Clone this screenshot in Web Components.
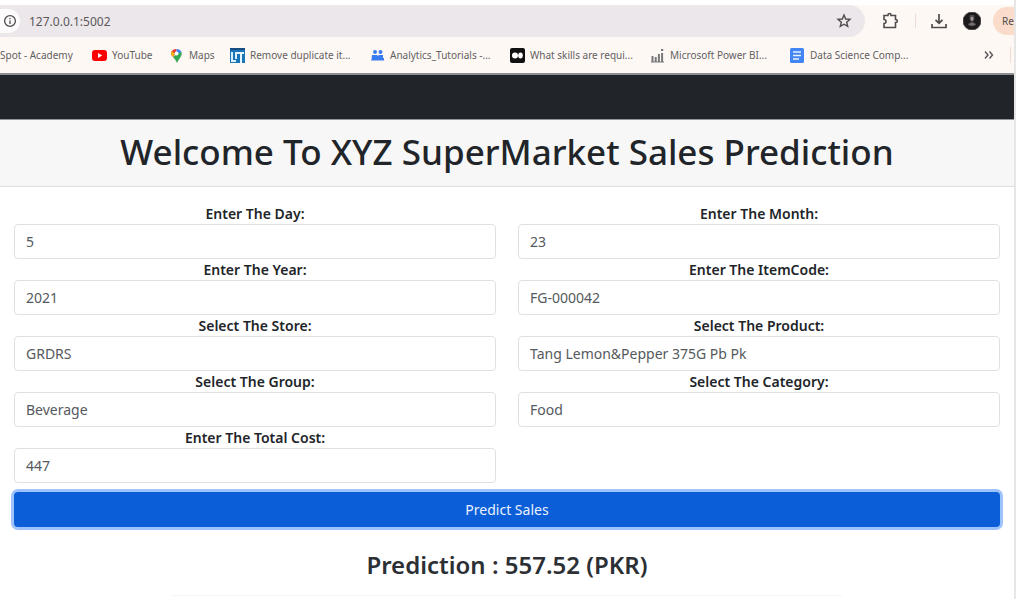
<!DOCTYPE html>
<html lang="en">
<head>
<meta charset="utf-8">
<title>XYZ SuperMarket Sales Prediction</title>
<style>
  html, body { margin: 0; height: 100%; background: #fff; }
  body { font-family: "Noto Sans", "Open Sans", sans-serif; color: #212529; overflow: hidden; }
</style>
</head>
<body>
<app-window>
  <address-bar slot="chrome" url="127.0.0.1:5002"></address-bar>
  <bookmark-bar slot="chrome">
    <book-mark style="--w:92px">Spot - Academy</book-mark>
    <book-mark icon="youtube" style="--w:77px">YouTube</book-mark>
    <book-mark icon="maps" style="--w:61px">Maps</book-mark>
    <book-mark icon="it">Remove duplicate it...</book-mark>
    <book-mark icon="people">Analytics_Tutorials -...</book-mark>
    <book-mark icon="medium">What skills are requi...</book-mark>
    <book-mark icon="chart">Microsoft Power BI...</book-mark>
    <book-mark icon="doc">Data Science Comp...</book-mark>
  </bookmark-bar>
  <site-header>Welcome To XYZ SuperMarket Sales Prediction</site-header>
  <prediction-form>
    <form-field label="Enter The Day:" value="5"></form-field>
    <form-field label="Enter The Month:" value="23"></form-field>
    <form-field label="Enter The Year:" value="2021"></form-field>
    <form-field label="Enter The ItemCode:" value="FG-000042"></form-field>
    <form-field kind="select" label="Select The Store:" value="GRDRS"></form-field>
    <form-field kind="select" label="Select The Product:" value="Tang Lemon&amp;Pepper 375G Pb Pk"></form-field>
    <form-field kind="select" label="Select The Group:" value="Beverage"></form-field>
    <form-field kind="select" label="Select The Category:" value="Food"></form-field>
    <form-field label="Enter The Total Cost:" value="447"></form-field>
    <span slot="action">Predict Sales</span>
    <span slot="result">Prediction : 557.52 (PKR)</span>
  </prediction-form>
</app-window>
<script>
const define = (name, html, setup) => customElements.define(name, class extends HTMLElement {
  connectedCallback() {
    if (this.shadowRoot) return;
    const t = document.createElement('template');
    t.innerHTML = html;
    this.attachShadow({ mode: 'open' }).append(t.content.cloneNode(true));
    if (setup) setup(this, this.shadowRoot);
  }
});

define('app-window', `
<style>
  :host { display: flex; flex-direction: column; box-sizing: border-box; min-height: 100vh;
    margin-right: 10px; padding-top: 5px; border-right: 2px solid #e6e6e6; overflow: hidden; }
  header { background: #fef8f5; border-bottom: 2px solid #8c8e90; }
</style>
<header><slot name="chrome"></slot></header>
<main><slot></slot></main>`);

define('address-bar', `
<style>
  :host { display: flex; align-items: center; height: 32px; font-size: 12px; overflow: hidden; }
  .pill { flex: 1; display: flex; align-items: center; height: 32px; min-width: 0; background: #ece7ea;
    border-radius: 0 16px 16px 0; }
  input { flex: 1; min-width: 0; border: 0; padding: 0; background: none; font: inherit; color: #5b585b; outline: 0; margin-left: 9px; }
  button { border: 0; padding: 0; background: none; display: grid; place-items: center; color: #504c4d; flex: none; }
  .info { width: 20px; height: 24px; background: #fdfbfc; border-radius: 0 12px 12px 0; }
  .star { width: 42px; }
  .tools { display: flex; align-items: center; flex: none; }
  .ext { width: 50px; } .down { width: 46px; } .me { width: 20px; }
  .sep { width: 1px; height: 14px; background: #ecdcd6; }
  .chip { margin-left: 11px; width: 21px; height: 28px; padding-left: 9px; background: #fbdccb;
    border-radius: 14px 0 0 14px; font: 10px "Noto Sans", sans-serif; display: flex; align-items: center; justify-content: flex-start; }
  svg { display: block; fill: none; stroke: currentColor; }
</style>
<div class="pill">
  <button class="info" aria-label="Site information"><svg width="14" height="14" viewBox="0 0 14 14" stroke-width="1.3"><circle cx="7" cy="7" r="5.4"/><path d="M7 6.4V10M7 4v1.2"/></svg></button>
  <input aria-label="Address">
  <button class="star" aria-label="Bookmark"><svg width="16" height="16" viewBox="0 0 16 16" stroke-width="1.4"><path d="M8 2l1.7 4 4.3.4-3.300 2.800 1 4.200L8 11.200l-3.700 2.200 1-4.200L2 6.400 6.300 6z"/></svg></button>
</div>
<div class="tools">
  <button class="ext" aria-label="Extensions"><svg width="18" height="18" viewBox="0 0 18 18" stroke-width="1.600"><path d="M3 3.500h4V3a1.500 1.500 0 0 1 3 0v.5h4.500V7.500h.3a1.500 1.500 0 0 1 0 3h-.3V15.500H3v-4a2 2 0 0 0 0-4z"/></svg></button>
  <span class="sep"></span>
  <button class="down" aria-label="Downloads"><svg width="18" height="18" viewBox="0 0 18 18" stroke-width="1.700"><path d="M9 2v9M5.500 7.800L9 11.200l3.500-3.400M2 12v3.500h14V12"/></svg></button>
  <button class="me" aria-label="Profile"><svg width="18" height="18" viewBox="0 0 18 18" stroke="none"><circle cx="9" cy="9" r="9" fill="#1d1a1c"/><ellipse cx="9" cy="6.500" rx="2" ry="2.800" fill="#a39a9c"/><path d="M5 12.500q4-4 8 0l-4 1.500z" fill="#7a7378"/><path d="M7 5q2-2 4 0V3.500H7z" fill="#1d1a1c"/></svg></button>
  <button class="chip">Re</button>
</div>`, (h, r) => r.querySelector('input').value = h.getAttribute('url'));

define('bookmark-bar', `
<style>
  :host { display: flex; align-items: center; height: 36px; font-size: 10px; color: #625f61; }
  nav { display: flex; flex: 1; min-width: 0; overflow: hidden; }
  button { border: 0; padding: 0; background: none; color: #5a5557; width: 20px; margin-right: 11px; display: grid; place-items: center; }
  .sep { width: 1px; height: 16px; background: #f1dcd4; margin-right: 3px; }
</style>
<nav><slot></slot></nav>
<button aria-label="More bookmarks"><svg width="12" height="10" viewBox="0 0 12 10" fill="none" stroke="currentColor" stroke-width="1.400"><path d="M2 1.500L5 5 2 8.500M6.500 1.500l3 3.500-3 3.500"/></svg></button>
<span class="sep"></span>`);

const icons = {
  youtube: '<rect y="2" width="15" height="11" rx="3" fill="#f00"/><path d="M6 5l4.200 2.500L6 10z" fill="#fff"/>',
  maps: '<path d="M2 5.500A5.300 5.300 0 0 1 7.500 1v3.500L4 9Q2 7 2 5.500z" fill="#ea4335"/><path d="M7.500 1Q11 1 12.500 4L8 8 7.500 4z" fill="#4285f4"/><path d="M2.600 3.300L5.500 5.500 4 9Q1.500 6.500 2.600 3.300z" fill="#fbbc04"/><path d="M12.500 4q1 3-1.500 6-1.600 2-3 5-1.500-3.500-4-6l4-3z" fill="#34a853"/><circle cx="7.500" cy="5.600" r="2" fill="#fff"/>',
  it: '<rect width="15" height="15" fill="#1976b8"/><path d="M2 4v9h4M6 4v7" stroke="#d9f0ff" stroke-width="2" fill="none"/><path d="M7 5h7M11 5v10" stroke="#e5f4ff" stroke-width="2"/><path d="M0 1h15" stroke="#174d83" stroke-width="2"/>',
  people: '<g fill="#397cf2"><circle cx="5" cy="4" r="2"/><circle cx="10.500" cy="4" r="2"/><path d="M2 7h5l1 1 1-1h4v5H1.500zM2 10h12v2.500H1z"/></g>',
  medium: '<rect width="15" height="15" rx="2" fill="#111"/><circle cx="5" cy="7.500" r="3" fill="#fff"/><ellipse cx="10.500" cy="7.500" rx="2.300" ry="3" fill="#fff"/>',
  chart: '<path d="M2.500 8v6M5.700 9v5M8.900 6v8M12.100 5v9" stroke="#77777a" stroke-width="2"/><path d="M1 14h13" stroke="#77777a"/><path d="M11 2h2.200" stroke="#77777a" stroke-width="2"/>',
  doc: '<rect width="14" height="15" rx="1.500" fill="#4285f4"/><path d="M3 4h8M3 7.500h8M3 11h6" stroke="#e9f2ff" stroke-width="1.500"/>'
};
define('book-mark', `
<style>
  :host { display: block; flex: none; width: var(--w, 140px); }
  a { display: flex; align-items: center; gap: 5px; color: inherit; text-decoration: none; white-space: nowrap; }
  svg { flex: none; }
</style>
<a href="#"><slot></slot></a>`, (h, r) => {
  const i = icons[h.getAttribute('icon')];
  if (i) r.querySelector('a').insertAdjacentHTML('afterbegin', `<svg width="15" height="15" viewBox="0 0 15 15">${i}</svg>`);
});

define('site-header', `
<style>
  :host { display: block; }
  nav { height: 44px; background: #212529; border-bottom: 1px solid #94969a; }
  div { padding: 8px 14px 10px; background: #f7f7f7; border-bottom: 1px solid #dfdfdf; }
  h1 { margin: 0; font-size: 35px; line-height: 48px; font-weight: 500; text-align: center; white-space: nowrap; }
</style>
<nav aria-label="Main"></nav>
<div><h1><slot></slot></h1></div>`);

define('form-field', `
<style>
  :host { display: block; font-size: 14px; }
  label { display: block; height: 21px; line-height: 21px; text-align: center; font-weight: 600; }
  input, select { display: block; box-sizing: border-box; width: 100%; height: 35px; margin: 0; padding: 0 11px 1px;
    border: 1px solid #dee1e4; border-radius: 4px; background: #fff; color: #55595d; font: inherit; appearance: none; outline: 0; }
</style>
<label for="c"></label>`, (h, r) => {
  const v = h.getAttribute('value');
  const c = document.createElement(h.getAttribute('kind') === 'select' ? 'select' : 'input');
  c.id = 'c';
  if (c.localName === 'select') c.add(new Option(v, v)); else c.value = v;
  r.querySelector('label').textContent = h.getAttribute('label');
  r.append(c);
});

define('prediction-form', `
<style>
  :host { display: block; padding: 16px 14px 0; }
  .grid { display: grid; grid-template-columns: 1fr 1fr; column-gap: 22px; }
  button { display: block; width: 100%; height: 35px; margin-top: 9px; border: 0; border-radius: 4px; background: #0b5ed7;
    box-shadow: 0 0 0 3px #9ec2fb; color: #eaf2ff; font: 14px "Noto Sans", sans-serif; }
  h2 { margin: 22px 0 0; font-size: 24px; line-height: 32px; font-weight: 600; text-align: center; color: #2c3034; }
  hr { width: 68%; margin: 14px auto 0; border: 0; border-top: 1px solid #f5f5f5; }
</style>
<form>
  <div class="grid"><slot></slot></div>
  <button type="button"><slot name="action"></slot></button>
</form>
<h2><slot name="result"></slot></h2>
<hr>`);
</script>
</body>
</html>
